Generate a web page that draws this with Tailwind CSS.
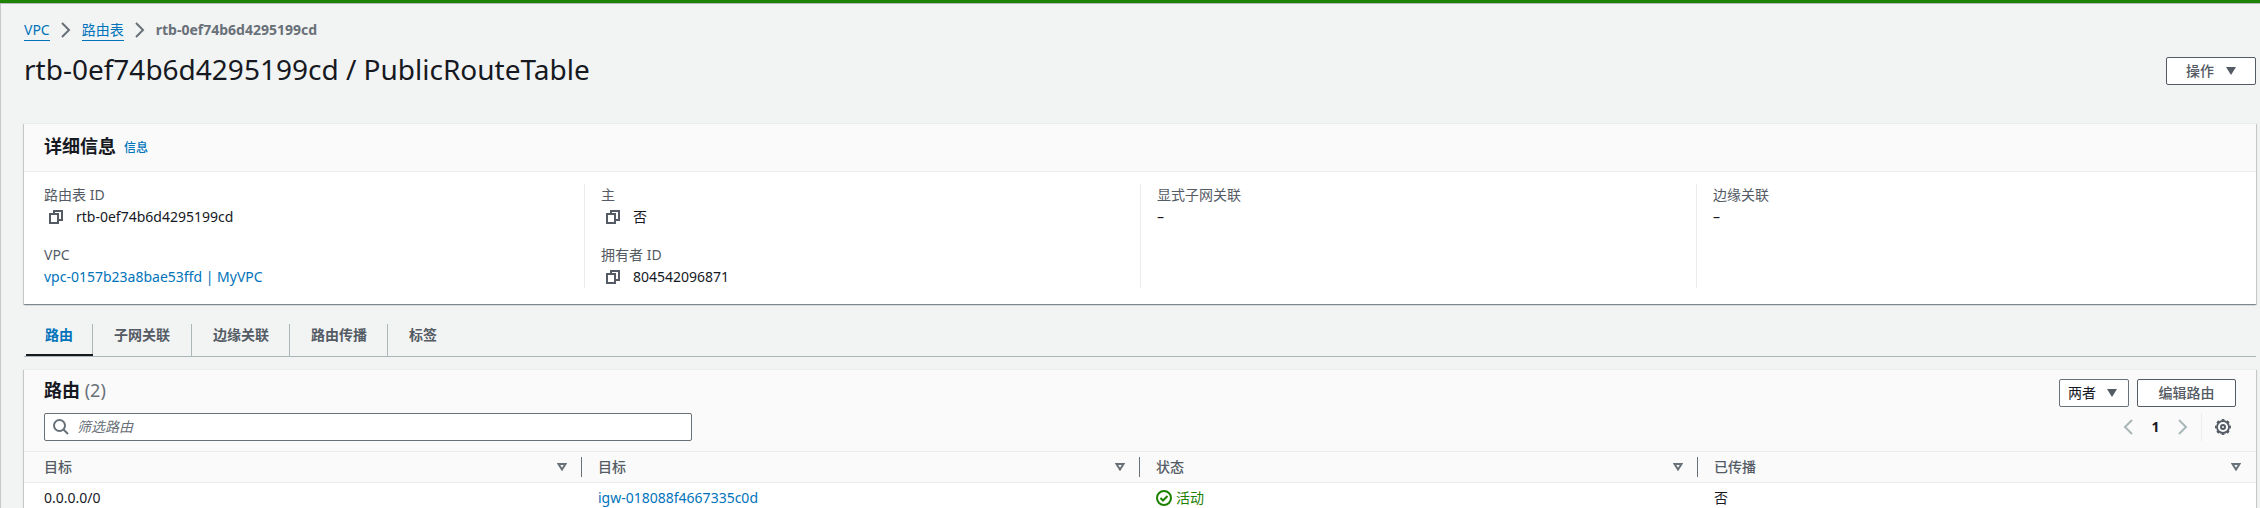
<!DOCTYPE html>
<html lang="zh-CN">
<head>
<meta charset="utf-8">
<meta name="viewport" content="width=device-width, initial-scale=1">
<title>rtb-0ef74b6d4295199cd / PublicRouteTable</title>
<script src="https://cdn.jsdelivr.net/npm/@tailwindcss/browser@4"></script>
</head>
<body class="bg-[#f2f3f3] font-['Noto_Sans','Noto_Sans_CJK_SC',sans-serif] text-sm leading-[22px] text-[#16191f]">
<svg class="hidden" aria-hidden="true">
  <symbol id="chevron" viewBox="0 0 10 16"><path d="M1 1l7 7-7 7" fill="none" stroke="currentColor" stroke-width="2"/></symbol>
  <symbol id="copy" viewBox="0 0 16 16"><path d="M2 5h8v9H2zM6 5V2h8v9h-4" fill="none" stroke="currentColor" stroke-width="2"/></symbol>
  <symbol id="caret" viewBox="0 0 10 8"><path d="M0 0h10L5 8z" fill="currentColor"/></symbol>
  <symbol id="sort" viewBox="0 0 10 8"><path d="M1.500 1h7L5 6.500z" fill="none" stroke="currentColor" stroke-width="2"/></symbol>
</svg>
<div class="flex h-screen flex-col overflow-hidden border-t-3 border-[#1d8102]">
<main class="min-h-0 grow border-t border-l border-t-[#b4bcc0] border-l-[#c6cacc] pr-1 pl-[23px]">
  <nav aria-label="路径" class="mt-[15px] flex h-[22px] items-center">
    <a href="#" class="border-b border-[#0073bb] leading-5 text-[#0073bb]">VPC</a>
    <svg class="mx-[11px] h-4 w-[10px] text-[#687078]"><use href="#chevron"/></svg>
    <a href="#" class="border-b border-[#0073bb] leading-5 text-[#0073bb]">路由表</a>
    <svg class="mx-[11px] h-4 w-[10px] text-[#687078]"><use href="#chevron"/></svg>
    <span class="font-bold text-[#687078]">rtb-0ef74b6d4295199cd</span>
  </nav>

  <header class="mt-[10px] flex items-start justify-between">
    <h1 class="text-[28px] leading-9">rtb-0ef74b6d4295199cd / PublicRouteTable</h1>
    <button type="button" class="mt-[6px] flex h-7 w-[90px] items-center justify-center gap-3 rounded-xs border border-[#545b64] bg-white font-medium text-[#545b64]">操作<svg class="h-2 w-[10px]"><use href="#caret"/></svg></button>
  </header>

  <section class="mt-9 bg-white shadow-[0_1px_1px_0_rgba(0,28,36,.3),1px_1px_1px_0_rgba(0,28,36,.15),-1px_1px_1px_0_rgba(0,28,36,.15)]">
    <div class="flex h-[49px] items-center gap-2 border-t border-b border-[#eaeded] bg-[#fafafa] px-5 pb-[3px]">
      <h2 class="text-lg leading-[22px] font-bold">详细信息</h2>
      <a href="#" class="pt-1 text-xs font-medium text-[#0073bb]">信息</a>
    </div>
    <dl class="grid grid-cols-4 px-1 pt-3 pb-4">
      <div class="flex flex-col gap-4 pl-4">
        <div>
          <dt class="text-[#545b64]">路由表 ID</dt>
          <dd class="flex items-center"><button type="button" aria-label="复制路由表 ID" class="mr-3 ml-1 text-[#545b64]"><svg class="size-4"><use href="#copy"/></svg></button>rtb-0ef74b6d4295199cd</dd>
        </div>
        <div>
          <dt class="text-[#545b64]">VPC</dt>
          <dd><a href="#" class="text-[#0073bb]">vpc-0157b23a8bae53ffd | MyVPC</a></dd>
        </div>
      </div>
      <div class="flex flex-col gap-4 border-l border-[#eaeded] pl-4">
        <div>
          <dt class="text-[#545b64]">主</dt>
          <dd class="flex items-center"><button type="button" aria-label="复制主" class="mr-3 ml-1 text-[#545b64]"><svg class="size-4"><use href="#copy"/></svg></button>否</dd>
        </div>
        <div>
          <dt class="text-[#545b64]">拥有者 ID</dt>
          <dd class="flex items-center"><button type="button" aria-label="复制拥有者 ID" class="mr-3 ml-1 text-[#545b64]"><svg class="size-4"><use href="#copy"/></svg></button>804542096871</dd>
        </div>
      </div>
      <div class="border-l border-[#eaeded] pl-4">
        <dt class="text-[#545b64]">显式子网关联</dt>
        <dd>–</dd>
      </div>
      <div class="border-l border-[#eaeded] pl-4">
        <dt class="text-[#545b64]">边缘关联</dt>
        <dd>–</dd>
      </div>
    </dl>
  </section>

  <div role="tablist" class="mt-5 flex h-[33px] border-b border-[#aab7b8] pl-0.5 font-bold text-[#545b64]">
    <button type="button" role="tab" aria-selected="true" class="flex border-b-2 border-[#16191f] text-[#0073bb]"><span class="border-r border-[#aab7b8] px-[19px]">路由</span></button>
    <button type="button" role="tab" class="flex"><span class="border-r border-[#aab7b8] px-[21px]">子网关联</span></button>
    <button type="button" role="tab" class="flex"><span class="border-r border-[#aab7b8] pr-5 pl-[21px]">边缘关联</span></button>
    <button type="button" role="tab" class="flex"><span class="border-r border-[#aab7b8] pr-5 pl-[21px]">路由传播</span></button>
    <button type="button" role="tab" class="flex"><span class="px-[21px]">标签</span></button>
  </div>

  <section class="mt-3 bg-white shadow-[0_1px_1px_0_rgba(0,28,36,.3),1px_1px_1px_0_rgba(0,28,36,.15),-1px_1px_1px_0_rgba(0,28,36,.15)]">
    <div class="border-t border-[#eaeded] bg-[#fafafa] px-5 pt-[9px] pb-[10px]">
      <div class="flex items-start justify-between">
        <h2 class="text-lg leading-[22px] font-bold">路由 <span class="font-normal text-[#687078]">(2)</span></h2>
        <div class="flex gap-2">
          <div class="relative h-7">
            <select aria-label="筛选类型" class="h-7 w-[70px] appearance-none rounded-xs border border-[#687078] bg-white pl-2"><option>两者</option></select>
            <svg class="pointer-events-none absolute top-[10px] right-3 h-2 w-[10px] text-[#545b64]"><use href="#caret"/></svg>
          </div>
          <button type="button" class="h-7 w-[99px] rounded-xs border border-[#545b64] bg-white font-medium text-[#545b64]">编辑路由</button>
        </div>
      </div>
      <div class="mt-[6px] flex items-center justify-between">
        <label class="flex h-7 w-[648px] items-center gap-2 rounded-xs border border-[#687078] bg-white pl-2 text-[#687078]">
          <svg class="size-4" viewBox="0 0 16 16" fill="none" stroke="currentColor" stroke-width="2"><circle cx="6.500" cy="6.500" r="5.500"/><path d="M10.500 10.500L15 15"/></svg>
          <input type="text" aria-label="筛选路由" placeholder="筛选路由" class="grow outline-none placeholder:text-[#687078] placeholder:italic">
        </label>
        <div class="flex items-center">
          <button type="button" aria-label="上一页" class="text-[#aab7b8]"><svg class="h-4 w-[10px] rotate-180"><use href="#chevron"/></svg></button>
          <span class="w-[45px] text-center font-bold">1</span>
          <button type="button" aria-label="下一页" class="text-[#aab7b8]"><svg class="h-4 w-[10px]"><use href="#chevron"/></svg></button>
          <div class="ml-[13px] flex h-7 items-center border-l border-[#eaeded] pr-[5px] pl-[13px]">
            <button type="button" aria-label="首选项" class="text-[#545b64]">
              <svg class="size-4" viewBox="0 0 16 16" fill="none" stroke="currentColor"><circle cx="8" cy="8" r="6" stroke-width="1.800"/><circle cx="8" cy="8" r="7.200" stroke-width="1.600" pathLength="80" stroke-dasharray="5 5" stroke-dashoffset="2.500"/><circle cx="8" cy="8" r="2" stroke-width="2"/></svg>
            </button>
          </div>
        </div>
      </div>
    </div>
    <table class="w-full table-fixed text-left">
      <thead class="border-t border-b border-[#eaeded] bg-[#fafafa] text-[#545b64]">
        <tr class="h-[31px]">
          <th scope="col" class="p-0 font-medium"><div class="flex h-5 items-center justify-between border-r border-[#687078] pr-[14px] pl-5">目标<svg class="h-2 w-[10px] text-[#687078]"><use href="#sort"/></svg></div></th>
          <th scope="col" class="p-0 font-medium"><div class="flex h-5 items-center justify-between border-r border-[#687078] pr-[14px] pl-4">目标<svg class="h-2 w-[10px] text-[#687078]"><use href="#sort"/></svg></div></th>
          <th scope="col" class="p-0 font-medium"><div class="flex h-5 items-center justify-between border-r border-[#687078] pr-[14px] pl-4">状态<svg class="h-2 w-[10px] text-[#687078]"><use href="#sort"/></svg></div></th>
          <th scope="col" class="p-0 font-medium"><div class="flex h-5 items-center justify-between pr-[15px] pl-4">已传播<svg class="h-2 w-[10px] text-[#687078]"><use href="#sort"/></svg></div></th>
        </tr>
      </thead>
      <tbody>
        <tr>
          <td class="py-1 pl-5">0.0.0.0/0</td>
          <td class="py-1 pl-4"><a href="#" class="text-[#0073bb]">igw-018088f4667335c0d</a></td>
          <td class="py-1 pl-4"><span class="flex items-center gap-1 text-[#1d8102]"><svg class="size-4" viewBox="0 0 16 16" fill="none" stroke="currentColor" stroke-width="2"><circle cx="8" cy="8" r="7"/><path d="M4.500 8l2.500 2.500 4.500-4.500"/></svg>活动</span></td>
          <td class="py-1 pl-4">否</td>
        </tr>
      </tbody>
    </table>
  </section>
</main>
</div>
</body>
</html>
